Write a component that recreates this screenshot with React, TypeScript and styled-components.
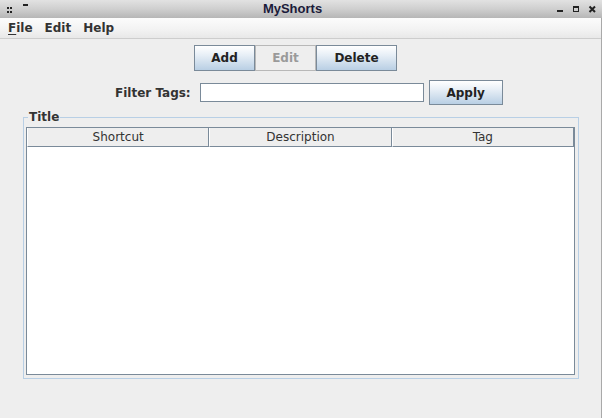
import styled, { createGlobalStyle, css } from "styled-components";

const GlobalStyle = createGlobalStyle`
  html, body {
    margin: 0;
    padding: 0;
    background: #eeeeee;
  }
  body {
    font-family: "DejaVu Sans", "Liberation Sans", sans-serif;
  }
`;

const Window = styled.div`
  width: 602px;
  height: 418px;
  display: flex;
  flex-direction: column;
  overflow: hidden;
  background: #eeeeee;
`;

const TitleBar = styled.div`
  height: 18px;
  display: flex;
  align-items: center;
  background: linear-gradient(to bottom, #e2e2e2 0%, #cfcfcf 50%, #b6b6b6 100%);
`;

const TitleText = styled.div`
  flex: 1;
  text-align: center;
  font-family: "Liberation Sans", Arial, sans-serif;
  font-weight: bold;
  font-size: 13px;
  line-height: 18px;
  color: #1b1b3a;
`;

const Frame = styled.div`
  flex: 1;
  display: flex;
  flex-direction: column;
  border-right: 1px solid #a9a9a9;
`;

const MenuBar = styled.div`
  height: 20px;
  display: flex;
  align-items: center;
  padding-left: 2px;
  background: linear-gradient(to bottom, #fcfcfc 0%, #f2f2f2 60%, #e8e8e8 100%);
  border-bottom: 1px solid #cdcdcd;
`;

const MenuItem = styled.div`
  padding: 0 6px;
  font-weight: bold;
  font-size: 12px;
  color: #333333;
`;

const Mnemonic = styled.span`
  text-decoration: underline;
  text-underline-offset: 2px;
`;

const ButtonRow = styled.div`
  display: flex;
  padding: 6px 0 0 194px;
`;

const Button = styled.button<{ $width: number; $height?: number }>(
  (props) => css`
    box-sizing: border-box;
    width: ${props.$width}px;
    height: ${props.$height ?? 26}px;
    margin: 0;
    padding: 0;
    border: 1px solid #7a8a99;
    border-radius: 0;
    background: linear-gradient(to bottom, #ffffff 0%, #e9f0f7 35%, #b9cfe4 100%);
    font-family: "DejaVu Sans", sans-serif;
    font-weight: bold;
    font-size: 12px;
    color: #222222;
    &:disabled {
      background: #eeeeee;
      border-color: #b8b8b8;
      color: #9a9a9a;
    }
  `
);

const FilterRow = styled.div`
  display: flex;
  align-items: center;
  padding: 9px 0 0 115px;
`;

const Label = styled.label`
  font-weight: bold;
  font-size: 12px;
  color: #333333;
  margin-right: 9px;
`;

const TextField = styled.input`
  box-sizing: border-box;
  width: 224px;
  height: 19px;
  margin: 0 5px 0 0;
  padding: 0 2px;
  border: 1px solid #7a8a99;
  border-radius: 0;
  background: #ffffff;
  box-shadow: inset 1px 1px 0 #ffffff;
  outline: none;
`;

const Group = styled.fieldset`
  width: 556px;
  box-sizing: border-box;
  margin: 5px 0 0 23px;
  padding: 3px 3px 3px 2px;
  border: 1px solid #b8cfe5;
  min-width: 0;
`;

const Legend = styled.legend`
  margin-left: 2px;
  padding: 0 1px;
  font-weight: bold;
  font-size: 12px;
  line-height: 14px;
  color: #333333;
`;

const ScrollPane = styled.div`
  box-sizing: border-box;
  height: 248px;
  border: 1px solid #7a8a99;
  background: #ffffff;
  display: flex;
  flex-direction: column;
`;

const Header = styled.div`
  display: grid;
  grid-template-columns: repeat(3, 1fr);
`;

const HeaderCell = styled.div`
  height: 19px;
  box-sizing: border-box;
  background: #eeeeee;
  border-left: 1px solid #ffffff;
  border-right: 1px solid #7a8a99;
  border-bottom: 1px solid #7a8a99;
  text-align: center;
  font-size: 12px;
  line-height: 19px;
  color: #333333;
`;

const LeftControls = () => (
  <svg width="32" height="18" viewBox="0 0 32 18">
    <g fill="#222">
      <rect x="7" y="7" width="2" height="2" />
      <rect x="7" y="11" width="2" height="2" />
      <rect x="10" y="7" width="2" height="2" />
      <rect x="10" y="11" width="2" height="2" />
      <rect x="23" y="4" width="5" height="2" />
    </g>
  </svg>
);

const RightControls = () => (
  <svg width="49" height="18" viewBox="0 0 49 18">
    <g fill="#222">
      <rect x="4" y="10" width="6" height="2" />
    </g>
    <rect x="20.5" y="6.5" width="5" height="5" fill="none" stroke="#222" />
    <rect x="20" y="6" width="6" height="2" fill="#222" />
    <path d="M36.5 6.5 L42 12 M42 6.5 L36.5 12" stroke="#222" strokeWidth="2" />
  </svg>
);

const columns = ["Shortcut", "Description", "Tag"];

const App = () => {
  return (
    <Window>
      <GlobalStyle />
      <TitleBar>
        <LeftControls />
        <TitleText>MyShorts</TitleText>
        <RightControls />
      </TitleBar>
      <Frame>
        <MenuBar>
          <MenuItem>
            <Mnemonic>F</Mnemonic>ile
          </MenuItem>
          <MenuItem>Edit</MenuItem>
          <MenuItem>Help</MenuItem>
        </MenuBar>
        <ButtonRow>
          <Button $width={61}>Add</Button>
          <Button $width={61} disabled>
            Edit
          </Button>
          <Button $width={81}>Delete</Button>
        </ButtonRow>
        <FilterRow>
          <Label>Filter Tags:</Label>
          <TextField />
          <Button $width={74} $height={25}>
            Apply
          </Button>
        </FilterRow>
        <Group>
          <Legend>Title</Legend>
          <ScrollPane>
            <Header>
              {columns.map((c) => (
                <HeaderCell key={c}>{c}</HeaderCell>
              ))}
            </Header>
          </ScrollPane>
        </Group>
      </Frame>
    </Window>
  );
};

export default App;
